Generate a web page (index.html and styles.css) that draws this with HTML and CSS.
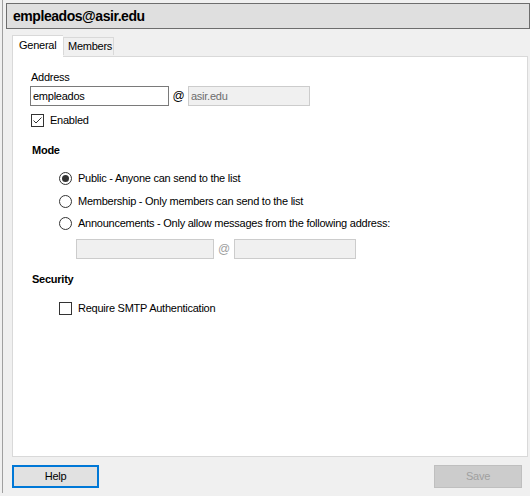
FILE: index.html
```html
<!DOCTYPE html>
<html>
<head>
<meta charset="utf-8">
<link rel="stylesheet" href="styles.css">
</head>
<body>
<div class="frame">
  <div class="header">empleados@asir.edu</div>
  <div class="tabs">
    <div class="tab active">General</div>
    <div class="tab">Members</div>
  </div>
  <div class="panel">
    <div class="label">Address</div>
    <div class="addr-row">
      <div class="input name">empleados</div>
      <span class="at">@</span>
      <div class="input domain disabled">asir.edu</div>
    </div>
    <div class="check-row enabled-row">
      <svg class="box" width="13" height="13" viewBox="0 0 13 13"><rect x="0.5" y="0.5" width="12" height="12" fill="#fff" stroke="#333"/><path d="M2.5 6.5 L5 9 L10.5 3.5" fill="none" stroke="#333" stroke-width="1"/></svg>
      <span>Enabled</span>
    </div>
    <div class="section">Mode</div>
    <div class="radios">
      <div class="radio-row">
        <svg class="radio" width="13" height="13" viewBox="0 0 13 13"><circle cx="6.5" cy="6.5" r="6" fill="#fff" stroke="#333"/><circle cx="6.5" cy="6.5" r="3.5" fill="#333"/></svg>
        <span>Public - Anyone can send to the list</span>
      </div>
      <div class="radio-row">
        <svg class="radio" width="13" height="13" viewBox="0 0 13 13"><circle cx="6.5" cy="6.5" r="6" fill="#fff" stroke="#333"/></svg>
        <span>Membership - Only members can send to the list</span>
      </div>
      <div class="radio-row">
        <svg class="radio" width="13" height="13" viewBox="0 0 13 13"><circle cx="6.5" cy="6.5" r="6" fill="#fff" stroke="#333"/></svg>
        <span>Announcements - Only allow messages from the following address:</span>
      </div>
      <div class="ann-row">
        <div class="input disabled ann-user"></div>
        <span class="at dim">@</span>
        <div class="input disabled ann-domain"></div>
      </div>
    </div>
    <div class="section security">Security</div>
    <div class="check-row smtp-row">
      <svg class="box" width="13" height="13" viewBox="0 0 13 13"><rect x="0.5" y="0.5" width="12" height="12" fill="#fff" stroke="#333"/></svg>
      <span>Require SMTP Authentication</span>
    </div>
  </div>
  <div class="buttons">
    <div class="btn help">Help</div>
    <div class="btn save">Save</div>
  </div>
</div>
</body>
</html>
```
FILE: styles.css
```css
html, body {
  margin: 0;
  padding: 0;
  background: #f0f0f0;
  width: 530px;
  height: 496px;
  overflow: hidden;
}
body {
  font-family: "Liberation Sans", Arial, sans-serif;
  font-size: 11px;
  letter-spacing: -0.25px;
  color: #000;
}
.frame {
  margin-left: 2px;
  border-left: 1px solid #a0a0a0;
  height: 493px;
  box-sizing: border-box;
  padding: 3px 0 0 3px;
  display: flex;
  flex-direction: column;
}
.header {
  height: 26px;
  box-sizing: border-box;
  width: 524px;
  background: #dfdfdf;
  border: 1px solid #6d6d6d;
  font-weight: bold;
  font-size: 14px;
  letter-spacing: -0.45px;
  line-height: 24px;
  padding-left: 6px;
}
.tabs {
  display: flex;
  align-items: flex-end;
  margin-top: 6px;
  margin-left: 6px;
  height: 21px;
  position: relative;
  z-index: 1;
}
.tab {
  box-sizing: border-box;
  border: 1px solid #d9d9d9;
  background: #f0f0f0;
  height: 18px;
  line-height: 16px;
  padding: 0 4px;
  width: 51px;
  margin-bottom: 1px;
  border-bottom: none;
}
.tab.active {
  background: #fff;
  height: 22px;
  margin-bottom: -1px;
  line-height: 18px;
  padding: 0 6px;
  width: 51px;
  border-right: none;
}
.panel {
  margin-left: 6px;
  width: 516px;
  height: 401px;
  box-sizing: border-box;
  background: #fff;
  border: 1px solid #d9d9d9;
  padding: 14px 0 0 17px;
}
.label {
  line-height: 13px;
  padding-left: 1px;
}
.addr-row, .ann-row {
  display: flex;
  align-items: center;
}
.addr-row {
  margin-top: 2px;
}
.input {
  box-sizing: border-box;
  height: 20px;
  border: 1px solid #7a7a7a;
  background: #fff;
  line-height: 18px;
  padding-left: 2px;
}
.input.disabled {
  background: #f0f0f0;
  border-color: #cccccc;
  color: #6d6d6d;
}
.name { width: 139px; }
.domain { width: 122px; }
.at {
  width: 19px;
  text-align: center;
  font-size: 12px;
}
.at.dim { color: #a0a0a0; width: 20px; }
.check-row, .radio-row {
  display: flex;
  align-items: center;
  height: 13px;
  line-height: 13px;
}
.check-row .box, .radio-row .radio {
  flex: none;
}
.check-row span, .radio-row span {
  margin-left: 6px;
}
.enabled-row {
  margin-top: 8px;
  padding-left: 1px;
}
.section {
  font-weight: bold;
  line-height: 13px;
  margin-top: 17px;
  padding-left: 2px;
}
.radios {
  margin-left: 29px;
  margin-top: 15px;
}
.radio-row + .radio-row {
  margin-top: 9.5px;
}
.ann-row {
  margin-top: 9px;
  margin-left: 17px;
}
.ann-user { width: 138px; }
.ann-domain { width: 122px; }
.section.security {
  margin-top: 14px;
}
.smtp-row {
  margin-top: 16px;
  margin-left: 29px;
}
.buttons {
  display: flex;
  justify-content: space-between;
  margin-top: 8px;
  margin-left: 6px;
  width: 510px;
}
.btn {
  box-sizing: border-box;
  height: 23px;
  text-align: center;
}
.help {
  width: 87px;
  background: #e1e1e1;
  border: 2px solid #0078d7;
  line-height: 19px;
}
.save {
  width: 88px;
  background: #cccccc;
  border: 1px solid #bfbfbf;
  color: #a0a0a0;
  line-height: 21px;
}
```
